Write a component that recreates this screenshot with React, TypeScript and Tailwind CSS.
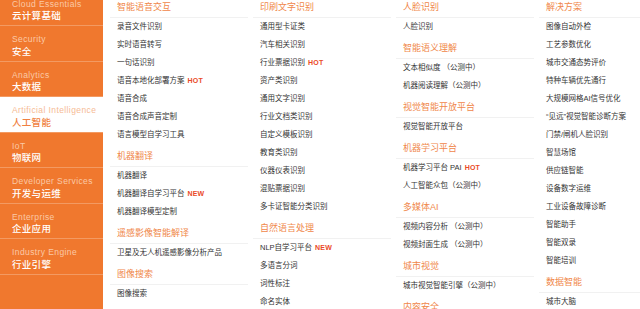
import React from 'react';

type Entry = { text: string; tag?: 'HOT' | 'NEW' };
type Group = { title: string; items: Entry[] };

const sideNav = [
  { en: 'Cloud Essentials', zh: '云计算基础' },
  { en: 'Security', zh: '安全' },
  { en: 'Analytics', zh: '大数据' },
  { en: 'Artificial Intelligence', zh: '人工智能', active: true },
  { en: 'IoT', zh: '物联网' },
  { en: 'Developer Services', zh: '开发与运维' },
  { en: 'Enterprise', zh: '企业应用' },
  { en: 'Industry Engine', zh: '行业引擎' },
  { en: '', zh: '' },
];

const columns: Group[][] = [
  [
    {
      title: '智能语音交互',
      items: [
        { text: '录音文件识别' },
        { text: '实时语音转写' },
        { text: '一句话识别' },
        { text: '语音本地化部署方案', tag: 'HOT' },
        { text: '语音合成' },
        { text: '语音合成声音定制' },
        { text: '语言模型自学习工具' },
      ],
    },
    {
      title: '机器翻译',
      items: [{ text: '机器翻译' }, { text: '机器翻译自学习平台', tag: 'NEW' }, { text: '机器翻译模型定制' }],
    },
    { title: '遥感影像智能解译', items: [{ text: '卫星及无人机遥感影像分析产品' }] },
    { title: '图像搜索', items: [{ text: '图像搜索' }] },
  ],
  [
    {
      title: '印刷文字识别',
      items: [
        { text: '通用型卡证类' },
        { text: '汽车相关识别' },
        { text: '行业票据识别', tag: 'HOT' },
        { text: '资产类识别' },
        { text: '通用文字识别' },
        { text: '行业文档类识别' },
        { text: '自定义模板识别' },
        { text: '教育类识别' },
        { text: '仪器仪表识别' },
        { text: '混贴票据识别' },
        { text: '多卡证智能分类识别' },
      ],
    },
    {
      title: '自然语言处理',
      items: [{ text: 'NLP自学习平台', tag: 'NEW' }, { text: '多语言分词' }, { text: '词性标注' }, { text: '命名实体' }],
    },
  ],
  [
    { title: '人脸识别', items: [{ text: '人脸识别' }] },
    { title: '智能语义理解', items: [{ text: '文本相似度 （公测中）' }, { text: '机器阅读理解（公测中）' }] },
    { title: '视觉智能开放平台', items: [{ text: '视觉智能开放平台' }] },
    { title: '机器学习平台', items: [{ text: '机器学习平台 PAI', tag: 'HOT' }, { text: '人工智能众包（公测中）' }] },
    { title: '多媒体AI', items: [{ text: '视频内容分析 （公测中）' }, { text: '视频封面生成 （公测中）' }] },
    { title: '城市视觉', items: [{ text: '城市视觉智能引擎（公测中）' }] },
    { title: '内容安全', items: [] },
  ],
  [
    {
      title: '解决方案',
      items: [
        { text: '图像自动外检' },
        { text: '工艺参数优化' },
        { text: '城市交通态势评价' },
        { text: '特种车辆优先通行' },
        { text: '大规模网格AI信号优化' },
        { text: '“见远”视觉智能诊断方案' },
        { text: '门禁/闸机人脸识别' },
        { text: '智慧场馆' },
        { text: '供应链智能' },
        { text: '设备数字运维' },
        { text: '工业设备故障诊断' },
        { text: '智能助手' },
        { text: '智能双录' },
        { text: '智能培训' },
      ],
    },
    { title: '数据智能', items: [{ text: '城市大脑' }] },
  ],
];

const font = { fontFamily: '"Liberation Sans", "Noto Sans CJK SC", sans-serif' };

const App: React.FC = () => {
  return (
    <div className="flex w-[640px] h-[309px] overflow-hidden bg-white" style={font}>
      <aside className="w-[103px] shrink-0 bg-[#f0782e]">
        <div className="-mt-[9.5px]">
          {sideNav.map((s, i) => (
            <div
              key={i}
              className={`h-[35.5px] pl-3 border-b border-[#f39a62] ${s.active ? 'bg-white' : ''}`}
            >
              <div
                className={`pt-[8px] text-[8.5px] leading-[10px] tracking-[0.4px] ${
                  s.active ? 'text-[#f6bb95]' : 'text-[#fbc9a6]'
                }`}
              >
                {s.en}
              </div>
              <div
                className={`mt-[1.5px] text-[9.5px] leading-[12px] font-medium tracking-[0.3px] ${
                  s.active ? 'text-[#f08040]' : 'text-white'
                }`}
              >
                {s.zh}
              </div>
            </div>
          ))}
        </div>
      </aside>

      <main className="flex pl-[7px] -mt-[5px]">
        {columns.map((groups, ci) => (
          <div key={ci} className="w-[143px] shrink-0">
            {groups.map((g) => (
              <div key={g.title}>
                <div className="h-[23px] mr-[5px] pt-[4px] px-[7px] border-b border-[#f1f1f1]">
                  <div className="text-[9px] leading-[16px] text-[#f0874a] whitespace-nowrap">{g.title}</div>
                </div>
                {g.items.map((it) => (
                  <div
                    key={it.text}
                    className="h-[18px] px-[7px] flex items-center text-[7.5px] text-[#333] whitespace-nowrap"
                  >
                    {it.text}
                    {it.tag && (
                      <span className="ml-[3px] font-bold text-[#ea4a28] text-[7px] tracking-[0.2px]">{it.tag}</span>
                    )}
                  </div>
                ))}
              </div>
            ))}
          </div>
        ))}
      </main>
    </div>
  );
};

export default App;
